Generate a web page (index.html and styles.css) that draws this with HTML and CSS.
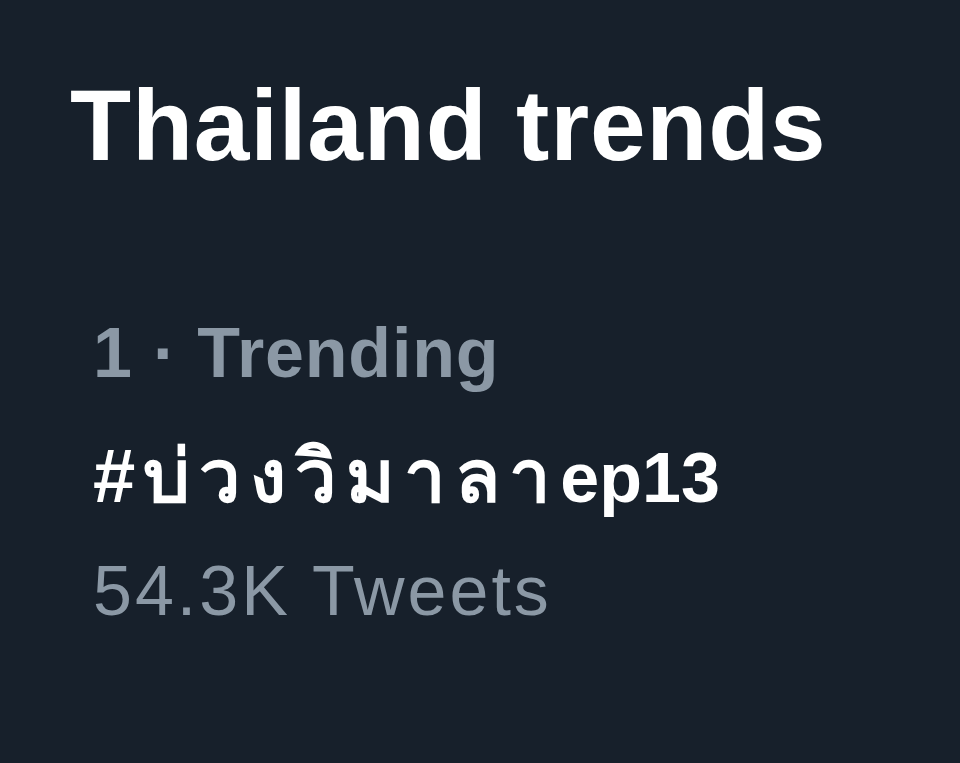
FILE: index.html
```html
<!DOCTYPE html>
<html lang="th">
<head>
  <meta charset="UTF-8">
  <title>Thailand trends</title>
  <link rel="stylesheet" href="styles.css">
</head>
<body>
  <div class="panel">
    <h1 class="panel-title">Thailand trends</h1>

    <div class="trend">
      <div class="trend-meta">1 · Trending</div>
      <div class="trend-name"><span class="hash">#</span><span class="thai">บ่วงวิมาลา</span>ep13</div>
      <div class="trend-count">54.3K Tweets</div>
    </div>
  </div>
</body>
</html>
```

FILE: styles.css
```css
html, body {
  margin: 0;
  height: 100%;
}

body {
  background-color: #17202b;
  font-family: "Liberation Sans", Arial, "Noto Sans", sans-serif;
  color: #ffffff;
}

.panel {
  padding-top: 75px;
}

.panel-title {
  margin: 0 0 0 70px;
  font-size: 100px;
  line-height: 100px;
  font-weight: bold;
  letter-spacing: 0.8px;
}

.trend {
  margin-top: 143px;
  padding-left: 93px;
}

.trend-meta,
.trend-name,
.trend-count {
  font-size: 70px;
  line-height: 70px;
  height: 70px;
}

.trend-meta {
  color: #8b98a5;
  font-weight: bold;
  letter-spacing: 0.8px;
}

.trend-name {
  margin-top: 53px;
  font-weight: bold;
  white-space: nowrap;
}

.hash {
  display: inline-block;
  font-size: 76px;
  margin-right: 8px;
}

.thai {
  font-size: 74px;
  letter-spacing: 9px;
}

.trend-count {
  margin-top: 45px;
  color: #8b98a5;
  letter-spacing: 3px;
}
```
